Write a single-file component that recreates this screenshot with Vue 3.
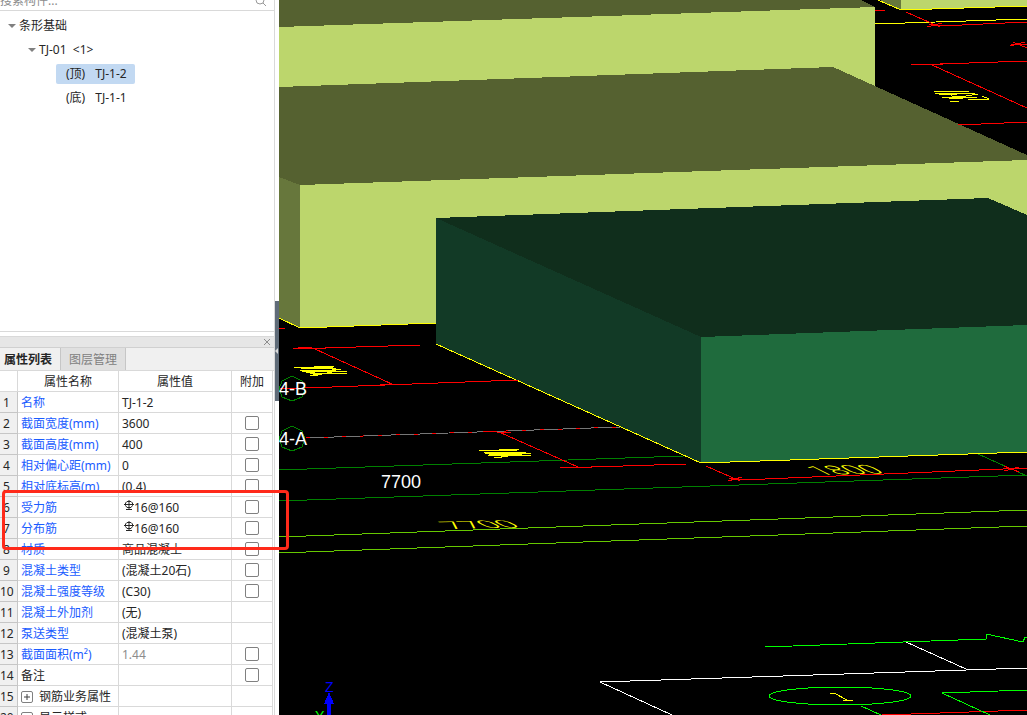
<script setup>
import { ref } from 'vue'

const search = ref('')
const selected = ref('TJ-1-2')
const tab = ref('props')

const children = [
  { pos: '(顶)', name: 'TJ-1-2' },
  { pos: '(底)', name: 'TJ-1-1' },
]

const rows = ref([
  { no: 1, name: '名称', value: 'TJ-1-2' },
  { no: 2, name: '截面宽度(mm)', value: '3600', check: true },
  { no: 3, name: '截面高度(mm)', value: '400', check: true },
  { no: 4, name: '相对偏心距(mm)', value: '0', check: true },
  { no: 5, name: '相对底标高(m)', value: '(0.4)', check: true },
  { no: 6, name: '受力筋', value: '16@160', rebar: true, check: true },
  { no: 7, name: '分布筋', value: '16@160', rebar: true, check: true },
  { no: 8, name: '材质', value: '商品混凝土', check: true },
  { no: 9, name: '混凝土类型', value: '(混凝土20石)', check: true },
  { no: 10, name: '混凝土强度等级', value: '(C30)', check: true },
  { no: 11, name: '混凝土外加剂', value: '(无)' },
  { no: 12, name: '泵送类型', value: '(混凝土泵)' },
  { no: 13, name: '截面面积(m²)', value: '1.44', check: true, readonly: true },
  { no: 14, name: '备注', value: '', check: true, plain: true },
  { no: 15, name: '钢筋业务属性', value: '', group: true },
  { no: 20, name: '显示样式', value: '', group: true },
])

// solid faces, back to front
const faces = [
  { c: 'olive-top', p: '279,0 861,0 875,7 279,27' },
  { c: 'olive-front', p: '279,27 875,7 875,90 279,90' },
  { c: 'olive-side', p: '880,0 901,0 901,10' },
  { c: 'olive-front', p: '901,0 1027,0 1027,6 901,10' },
  { c: 'olive-top', p: '279,87 833,67 1027,155 1027,160 300,185 279,177' },
  { c: 'olive-side', p: '279,177 300,185 300,328 279,318' },
  { c: 'olive-front', p: '300,185 1027,160 1027,323 436,323 300,328' },
  { c: 'green-top', p: '436,218 988,198 1027,215 1027,325 701,337' },
  { c: 'green-side', p: '436,218 701,337 701,463 436,344' },
  { c: 'green-front', p: '701,337 1027,325 1027,452 701,463' },
]

const lines = [
  // edges of the footings on the ground
  { c: 'yellow', p: '279,318 300,328 436,323' },
  { c: 'yellow', p: '436,344 701,463 1027,452' },
  { c: 'yellow', p: '878,0 901,10 1027,6' },
  { c: 'yellow', p: '875,24 1027,19' },
  // axes
  { c: 'gray', p: '306,438 620,427' },
  { c: 'red dashed', p: '306,438 620,427' },
  { c: 'green', p: '279,470 683,456' },
  { c: 'green', p: '279,501 1027,475' },
  { c: 'green', p: '978,454 1027,476' },
  { c: 'lime', p: '279,537 1027,510' },
  { c: 'lime', p: '279,553 1027,526' },
  // dimension lines
  { c: 'red', p: '279,328 285,328' },
  { c: 'red', p: '293,349 420,345' },
  { c: 'red', p: '298,347 326,349' },
  { c: 'red', p: '315,349 394,385' },
  { c: 'red', p: '279,389 518,380' },
  { c: 'red', p: '380,384 408,385' },
  { c: 'red', p: '483,431 511,433' },
  { c: 'red', p: '499,432 578,467' },
  { c: 'red', p: '560,468 686,464' },
  { c: 'red', p: '565,467 592,468' },
  { c: 'red', p: '706,466 740,481' },
  { c: 'red', p: '728,481 742,477' },
  { c: 'red', p: '729,478 741,480 1027,468' },
  { c: 'red', p: '1004,466 1019,472' },
  { c: 'red', p: '1004,471 1019,467' },
  { c: 'red', p: '875,11 885,10' },
  { c: 'red', p: '906,12 940,27' },
  { c: 'red', p: '927,27 942,23' },
  { c: 'red', p: '929,24 940,26 1027,22' },
  { c: 'red', p: '1010,46 1025,42' },
  { c: 'red', p: '1013,42 1027,48' },
  { c: 'red', p: '1011,44 1027,44' },
  { c: 'red', p: '911,65 1027,61' },
  { c: 'red', p: '916,64 943,65' },
  { c: 'red', p: '932,65 1027,108' },
  { c: 'red', p: '958,125 1027,122' },
  { c: 'red', p: '882,715 1027,710' },
  // room outline
  { c: 'white', p: '672,715 600,682 1027,668' },
  { c: 'white', p: '906,642 966,669' },
  { c: 'bright', p: '765,647 986,639 986,634 1023,642 1025,637 1027,637' },
  { c: 'bright', p: '990,715 942,693 1027,690' },
  { c: 'bright', p: '861,706 881,715' },
  // grid bubbles
  { c: 'green', p: '292,376 302,381 305,389 302,397 292,401 282,397 279,389 282,381 292,376' },
  { c: 'green', p: '292,426 302,431 305,439 302,447 292,451 282,447 279,439 282,431 292,426' },
]

// hatching drawn over the dimension lines
const marks = [
  'M294 367H333M294 368L334 366M300 370H336M301 369L337 368M302 371H347M306 373L341 369M304 372L343 371M310 374L348 373M310 375H318M306 371L316 375L338 371',
  'M479 450H517M480 451L519 449M485 453H521M484 452L526 452M488 453H531M489 455L523 454M488 456L532 455M494 457H502M492 453L504 457L520 453',
  'M934 92L970 91M935 93H971M939 95L975 93M942 97H977M943 98L966 96L978 94M949 99L963 98M968 100L989 99L982 96M950 101H959M948 93L955 98L964 97',
]
</script>

<template>
  <div class="app">
    <aside class="sidebar">
      <div class="search">
        <input v-model="search" type="text" placeholder="搜索构件..." aria-label="搜索构件">
        <svg class="search-icon" viewBox="0 0 12 12">
          <circle cx="5" cy="5" r="4" />
          <path d="M8 8L11 11" />
        </svg>
      </div>

      <ul class="tree">
        <li class="node level-1"><span class="arrow"></span>条形基础</li>
        <li class="node level-2"><span class="arrow"></span>TJ-01&nbsp; &lt;1&gt;</li>
        <li v-for="item in children" :key="item.name" class="node level-3">
          <button
            class="leaf"
            :class="{ selected: selected == item.name }"
            @click="selected = item.name"
          ><span>{{ item.pos }}</span><span>{{ item.name }}</span></button>
        </li>
      </ul>

      <section class="panel">
        <div class="panel-title">
          <button class="close" aria-label="关闭">
            <svg viewBox="0 0 8 8"><path d="M1 1L7 7M7 1L1 7" /></svg>
          </button>
        </div>
        <div class="tabs">
          <button :class="{ active: tab == 'props' }" @click="tab = 'props'">属性列表</button>
          <button :class="{ active: tab == 'layers' }" @click="tab = 'layers'">图层管理</button>
        </div>
        <table class="grid">
          <colgroup>
            <col class="col-no"><col class="col-name"><col class="col-value"><col>
          </colgroup>
          <thead>
            <tr><th></th><th>属性名称</th><th>属性值</th><th>附加</th></tr>
          </thead>
          <tbody>
            <tr v-for="row in rows" :key="row.no">
              <td class="no">{{ row.no }}</td>
              <td class="name" :class="{ plain: row.plain || row.group }">
                <button v-if="row.group" class="expand" aria-label="展开">
                  <svg viewBox="0 0 10 10"><path d="M2 5H8M5 2V8" /></svg>
                </button>{{ row.name }}
              </td>
              <td class="value" :class="{ muted: row.readonly }">
                <svg v-if="row.rebar" class="rebar" viewBox="0 0 10 11">
                  <path d="M3 1.5H7L8.5 3V5.5L7 7.5H3L1.5 5.5V3ZM5 0V10M0 4.5H10M2 9.5H8" />
                </svg>{{ row.value }}
              </td>
              <td class="extra">
                <input v-if="row.check" type="checkbox" :aria-label="row.name">
              </td>
            </tr>
          </tbody>
        </table>
      </section>
    </aside>

    <div class="splitter">
      <button class="handle" aria-label="收起"><span></span></button>
    </div>

    <main class="view">
      <svg class="scene" viewBox="279 0 748 715" preserveAspectRatio="xMinYMin slice">
        <polygon v-for="f in faces" :key="f.p" :class="f.c" :points="f.p" />
        <polyline v-for="(l, i) in lines" :key="i" :class="l.c" :points="l.p" />
        <path v-for="m in marks" :key="m" class="yellow" :d="m" />

        <ellipse class="bright" cx="840" cy="696" rx="71" ry="9" />
        <path class="yellow" d="M830 694L834 693L847 700M843 700H853" />

        <text class="label" x="279" y="395">4-B</text>
        <text class="label" x="279" y="445">4-A</text>
        <text class="label" x="381" y="488">7700</text>
        <!-- figures lying on the ground plane -->
        <text class="ground" transform="matrix(1.5 -0.04 1.2 0.6 820 475)">1800</text>
        <text class="ground" transform="matrix(1.6 -0.04 1 0.5 451 529)">7700</text>

        <path class="axis-z" d="M329 692L334 704H331V715H327V704H324Z" />
        <text class="axis-label z" x="325" y="692">Z</text>
        <text class="axis-label y" x="315" y="721">Y</text>
      </svg>
    </main>

    <div class="callout"></div>
  </div>
</template>

<style>
body {
  margin: 0;
}
</style>

<style scoped>
.app {
  position: relative;
  display: flex;
  height: 100vh;
  overflow: hidden;
  background: #fff;
  color: #262626;
  font-family: "Noto Sans", "Noto Sans CJK SC", sans-serif;
  font-size: 12px;
  line-height: 20px;
}

button {
  margin: 0;
  padding: 0;
  border: 0;
  background: none;
  color: inherit;
  font: inherit;
}

svg {
  display: block;
  fill: none;
}

.sidebar {
  box-sizing: border-box;
  flex: 0 0 275px;
  display: flex;
  flex-direction: column;
  border-right: 1px solid #d9d9d9;
}

.search {
  box-sizing: border-box;
  flex: 0 0 11px;
  display: flex;
  align-items: flex-end;
  justify-content: space-between;
  padding-right: 7px;
  overflow: hidden;
  border-bottom: 1px solid #d9d9d9;
}

.search input {
  width: 200px;
  height: 18px;
  padding: 0;
  border: 0;
  outline: 0;
  font: inherit;
}

.search input::placeholder {
  color: #8c8c8c;
}

.search-icon {
  width: 12px;
  height: 12px;
  margin-bottom: 3px;
  stroke: #999;
}

.tree {
  box-sizing: border-box;
  flex: 0 0 321px;
  margin: 0;
  padding: 3px 0 0;
  list-style: none;
  border-bottom: 1px solid #d9d9d9;
}

.node {
  display: flex;
  align-items: center;
  height: 24px;
}

.level-1 {
  padding-left: 8px;
}

.level-2 {
  padding-left: 28px;
}

.level-3 {
  padding-left: 56px;
}

.arrow {
  margin-right: 3px;
  border: 4px solid transparent;
  border-top-color: #808080;
  border-bottom: 0;
}

.leaf {
  display: flex;
  gap: 10px;
  padding: 0 8px 0 10px;
  border-radius: 2px;
}

.leaf.selected {
  background: #c2d9f2;
}

.panel {
  flex: 1;
  min-height: 0;
  margin-top: 4px;
  overflow: hidden;
}

.panel-title {
  box-sizing: border-box;
  display: flex;
  align-items: center;
  justify-content: flex-end;
  height: 12px;
  padding-right: 3px;
  background: #e6e6e6;
  border-top: 1px solid #d9d9d9;
  border-bottom: 1px solid #d0d0d0;
}

.close svg {
  width: 8px;
  height: 8px;
  stroke: #8c8c8c;
}

.tabs {
  box-sizing: border-box;
  display: flex;
  height: 23px;
  background: #f0f0f0;
  border-bottom: 1px solid #d9d9d9;
}

.tabs button {
  box-sizing: border-box;
  padding: 2px 8px 0;
  background: #e0e0e0;
  border: 1px solid #c6c6c6;
  border-width: 0 1px 0 0;
  color: #808080;
}

.tabs button:first-child {
  padding-left: 4px;
}

.tabs button.active {
  background: #f0f0f0;
  color: #262626;
  font-weight: bold;
}

.grid {
  width: 273px;
  table-layout: fixed;
  border-spacing: 0;
  line-height: 18px;
}

.col-no {
  width: 18px;
}

.col-name {
  width: 101px;
}

.col-value {
  width: 113px;
}

th,
td {
  box-sizing: border-box;
  height: 21px;
  padding: 2px 0 0;
  border-right: 1px solid #d9d9d9;
  border-bottom: 1px solid #d9d9d9;
  font-weight: normal;
  white-space: nowrap;
}

.no {
  background: #f0f0f0;
  border-color: #c6c6c6;
  text-indent: 3px;
}

tr:nth-child(n + 10) .no {
  text-indent: 0;
}

.name {
  padding-left: 3px;
  color: #1a5cff;
}

.name.plain {
  color: #262626;
}

.value {
  padding-left: 3px;
}

.value.muted {
  color: #8c8c8c;
}

.expand {
  box-sizing: border-box;
  width: 12px;
  height: 12px;
  margin-right: 6px;
  border: 1px solid #808080;
  border-radius: 2px;
  vertical-align: -1px;
}

.expand svg {
  width: 10px;
  height: 10px;
  stroke: #404040;
}

.rebar {
  display: inline-block;
  width: 10px;
  height: 11px;
  margin: 0 0 0 2px;
  vertical-align: 1px;
  stroke: #262626;
}

.extra {
  padding: 0;
}

.extra input {
  appearance: none;
  box-sizing: border-box;
  display: block;
  width: 14px;
  height: 14px;
  margin: 0 auto;
  background: #fff;
  border: 1px solid #808080;
  border-radius: 2px;
}

.extra input:checked {
  background: #1a5cff;
}

.splitter {
  flex: 0 0 4px;
  padding-top: 301px;
}

.handle {
  display: flex;
  align-items: center;
  width: 4px;
  height: 100px;
  background: #5f6b78;
}

.handle span {
  border: 3px solid transparent;
  border-right-color: #d9d9d9;
  border-left: 0;
}

.view {
  flex: 1;
  min-width: 0;
  background: #000;
}

.scene {
  width: 100%;
  height: 100%;
  shape-rendering: crispEdges;
}

.olive-top {
  fill: #556130;
}

.olive-side {
  fill: #67773c;
}

.olive-front {
  fill: #bcd66c;
}

.green-top {
  fill: #102e1c;
}

.green-side {
  fill: #123a26;
}

.green-front {
  fill: #1f6b3d;
}

.yellow {
  stroke: #ff0;
}

.red {
  stroke: #f00;
}

.dashed {
  stroke-dasharray: 4 14;
}

.gray {
  stroke: #777;
}

.green {
  stroke: #008000;
}

.lime {
  stroke: #66c800;
}

.white {
  stroke: #fff;
}

.bright {
  stroke: #0f0;
}

.label {
  fill: #fff;
  font-family: "Liberation Sans", sans-serif;
  font-size: 18px;
}

.ground {
  fill: #ff0;
  font-family: Roboto, sans-serif;
  font-size: 20px;
  font-weight: 300;
}

.axis-z {
  fill: #00f;
}

.axis-label {
  font-family: "Liberation Sans", sans-serif;
  font-size: 14px;
}

.axis-label.z {
  fill: #00f;
}

.axis-label.y {
  fill: #0f0;
}

/* marks the rebar rows */
.callout {
  position: absolute;
  top: 490px;
  left: 2px;
  box-sizing: border-box;
  width: 287px;
  height: 60px;
  border: 3px solid #ff2a1a;
  border-radius: 4px;
  pointer-events: none;
}
</style>
